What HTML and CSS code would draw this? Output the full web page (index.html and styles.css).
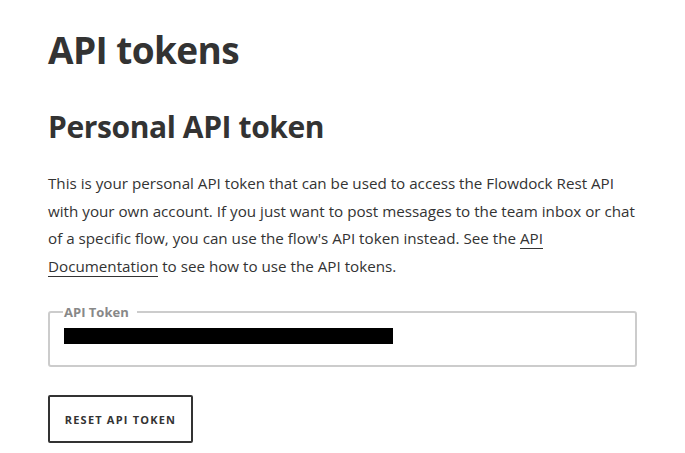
FILE: index.html
```html
<!DOCTYPE html>
<html>
<head>
<meta charset="utf-8">
<link rel="stylesheet" href="styles.css">
</head>
<body>
<main class="page">
  <h1 class="title">API tokens</h1>
  <h2 class="subtitle">Personal API token</h2>
  <p class="desc">This is your personal API token that can be used to access the Flowdock Rest API<br>with your own account. If you just want to post messages to the team inbox or chat<br>of a specific flow, you can use the flow's API token instead. See the <a class="link" href="#">API<br>Documentation</a> to see how to use the API tokens.</p>
  <fieldset class="field">
    <legend class="legend">API Token</legend>
    <div class="token"></div>
  </fieldset>
  <button class="btn">RESET API TOKEN</button>
</main>
</body>
</html>
```
FILE: styles.css
```css
html, body { margin: 0; padding: 0; background: #fff; }
body { font-family: "Open Sans", Lato, sans-serif; color: #333; }
.page { padding: 27px 48px 0 48px; width: 589px; }
.title { margin: 0; font-size: 37px; font-weight: 700; line-height: 46px; letter-spacing: -0.6px; }
.subtitle { margin: 36px 0 0 0; font-size: 30px; font-weight: 700; line-height: 36px; letter-spacing: -0.4px; }
.desc { margin: 25px 0 0 0; font-size: 15.2px; line-height: 27.6px; color: #333; white-space: nowrap; }
.link { color: #333; text-decoration: none; border-bottom: 1px solid #333; }
.field { margin: 24px 0 0 0; padding: 0 14px 22px 14px; border: 2px solid #ccc; border-radius: 3px; height: 37px; }
.legend { padding: 0 8px 0 1px; margin-left: -1px; font-size: 13px; font-weight: 700; color: #888; line-height: 16px; }
.token { width: 329px; height: 16px; background: #000; margin-top: 8px; }
.btn { margin-top: 28px; width: 145px; height: 48px; border: 2px solid #333; border-radius: 2px; background: #fff; font-family: "Open Sans", sans-serif; font-size: 11px; font-weight: 700; letter-spacing: 1.2px; color: #333; padding: 0; }
```
